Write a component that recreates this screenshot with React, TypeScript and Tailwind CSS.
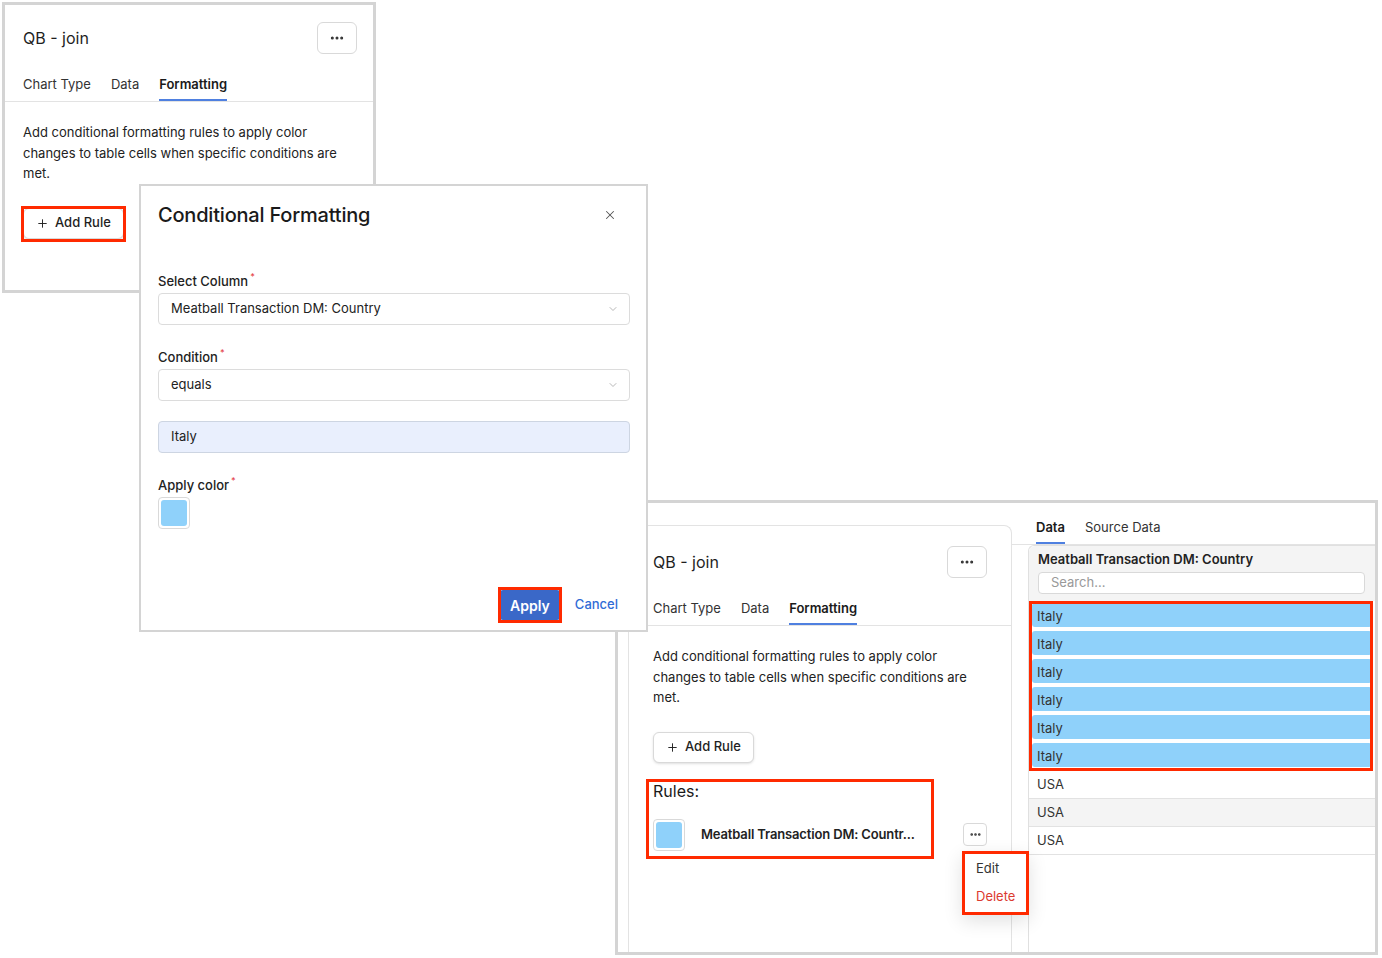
import type { ReactNode } from 'react';
import { ChevronDown, Ellipsis, Plus, X } from 'lucide-react';

const SKY = 'bg-[#8fd1fa]';

function Tabs({ pad, items, active, gap }: { pad: string; items: string[]; active: string; gap: string }) {
  return (
    <div className={`flex border-b border-[#e3e3e3] ${gap} ${pad}`}>
      {items.map((t) => (
        <div
          key={t}
          className={
            t === active
              ? 'border-b-2 border-[#4f80e0] pb-[5px] text-[13px] leading-5 font-semibold text-[#1a1a1a]'
              : 'border-b-2 border-transparent pb-[5px] text-[13px] leading-5 text-[#333]'
          }
        >
          {t}
        </div>
      ))}
    </div>
  );
}

function AddRuleButton({ marked }: { marked?: boolean }) {
  return (
    <div className="relative w-fit">
      <button className="flex h-[31px] items-center gap-[6px] rounded-md border border-[#d9d9d9] bg-white px-3 text-[13px] font-medium text-[#1f1f1f] shadow-sm">
        <Plus size={13} strokeWidth={1.75} />
        Add Rule
      </button>
      {marked && <div className="absolute -left-[2px] -right-[2px] -top-[2px] -bottom-[3px] border-[3px] border-[#ff2a00]" />}
    </div>
  );
}

// the chart settings panel, shown twice with different crops
function SettingsPanel({ pad, marked }: { pad: string; marked?: boolean }) {
  return (
    <>
      <div className={`flex h-8 items-center justify-between ${pad}`}>
        <span className="text-[16px] text-[#1f1f1f]">QB - join</span>
        <button className="flex h-8 w-10 items-center justify-center rounded-md border border-[#d9d9d9] bg-white">
          <Ellipsis size={16} strokeWidth={2.5} className="text-[#333]" />
        </button>
      </div>
      <div className="mt-5">
        <Tabs pad={pad} gap="gap-5" items={['Chart Type', 'Data', 'Formatting']} active="Formatting" />
      </div>
      <p className={`mt-5 text-[13px] leading-[20.5px] text-[#222] ${pad}`}>
        Add conditional formatting rules to apply color changes to table cells when specific conditions are met.
      </p>
      <div className={`mt-6 ${pad}`}>
        <AddRuleButton marked={marked} />
      </div>
    </>
  );
}

function Swatch() {
  return (
    <div className="flex h-8 w-8 items-center justify-center rounded-[4px] border border-[#d9d9d9] bg-white">
      <div className={`h-[26px] w-[26px] rounded-[3px] ${SKY}`} />
    </div>
  );
}

function Label({ children, className }: { children: ReactNode; className: string }) {
  return (
    <div className={`flex h-[18px] items-center text-[13px] leading-[18px] font-medium text-[#222] ${className}`}>
      {children}
      <span className="relative -top-[5px] ml-[2px] text-[9px] leading-none text-[#e5484d]">*</span>
    </div>
  );
}

function SelectBox({ value, className }: { value: string; className: string }) {
  return (
    <div className={`flex h-8 items-center justify-between rounded-[4px] border border-[#dcdcdc] bg-white pl-3 pr-[10px] text-[13px] text-[#222] ${className}`}>
      {value}
      <ChevronDown size={12} className="text-[#b8b8b8]" />
    </div>
  );
}

function ConditionModal() {
  return (
    <div className="absolute left-[139px] top-[184px] flex h-[448px] w-[509px] flex-col border-2 border-[#d4d4d4] bg-white pl-[17px] pr-4">
      <div className="mt-[15px] flex h-7 items-center justify-between">
        <h2 className="text-[20px] font-medium tracking-[-0.2px] text-[#1a1a1a]">Conditional Formatting</h2>
        <X size={14} strokeWidth={1.75} className="mr-[13px] text-[#555]" />
      </div>
      <Label className="mt-[43px]">Select Column</Label>
      <SelectBox className="mt-[3px]" value="Meatball Transaction DM: Country" />
      <Label className="mt-[23px]">Condition</Label>
      <SelectBox className="mt-[3px]" value="equals" />
      <div className="mt-5 flex h-8 items-center rounded-[4px] border border-[#cdd5e2] bg-[#e9effd] px-3 text-[13px] text-[#222]">
        Italy
      </div>
      <Label className="mt-[23px]">Apply color</Label>
      <div className="mt-[3px]">
        <Swatch />
      </div>
      <div className="mt-auto mb-[10px] flex items-center justify-end gap-[15px] pr-3">
        <div className="relative">
          <button className="h-[30px] w-[60px] rounded-[3px] bg-[#3a68c8] text-[14px] font-semibold text-white">Apply</button>
          <div className="absolute -left-[2px] -right-[2px] -top-[3px] -bottom-[3px] border-[3px] border-[#ff2a00]" />
        </div>
        <span className="text-[13px] font-medium text-[#2f6bd6]">Cancel</span>
      </div>
    </div>
  );
}

function RulesBlock() {
  return (
    <div className="relative mt-4 px-6">
      <div className="pt-px text-[16px] leading-[22px] text-[#1a1a1a]">Rules:</div>
      <div className="mt-[17px] flex items-center justify-between">
        <div className="flex items-center gap-4">
          <Swatch />
          <span className="text-[13px] font-semibold tracking-[-0.15px] text-[#222]">Meatball Transaction DM: Countr...</span>
        </div>
        <div className="relative">
          <button className="flex h-[23px] w-6 items-center justify-center rounded-[4px] border border-[#d9d9d9] bg-white">
            <Ellipsis size={13} strokeWidth={2.75} className="text-[#333]" />
          </button>
          {/* open row menu */}
          <div className="absolute -left-px top-[28px] z-10 h-[64px] w-[67px] border-[3px] border-[#ff2a00] bg-white pt-px pl-[11px] text-[13px] shadow-[0_6px_18px_rgba(0,0,0,0.12)]">
            <div className="flex h-7 items-center text-[#333]">Edit</div>
            <div className="flex h-7 items-center text-[#dc3a2f]">Delete</div>
          </div>
        </div>
      </div>
      <div className="absolute left-[17px] top-0 h-[80px] w-[288px] border-[3px] border-[#ff2a00]" />
    </div>
  );
}

function DataTable() {
  const italy = Array.from({ length: 6 });
  return (
    <div className="ml-4 flex-1 rounded-tl-[6px] border-l border-t border-[#e0e0e0]">
      <div className="rounded-tl-[6px] bg-[#f4f4f4] pb-[7px] pl-[9px] pr-[10px] pt-1">
        <div className="text-[13px] leading-[18px] font-semibold text-[#222]">Meatball Transaction DM: Country</div>
        <div className="mt-1 flex h-[22px] items-center rounded-[4px] border border-[#d9d9d9] bg-white pl-3 text-[13px] text-[#999]">
          Search...
        </div>
      </div>
      <div className="relative pt-[2px]">
        {italy.map((_, i) => (
          <div key={i} className="h-7 px-[3px]">
            <div className={`flex h-6 w-full items-center rounded-[3px] pl-[5px] pt-[3px] text-[13px] text-[#333] ${SKY}`}>Italy</div>
          </div>
        ))}
        <div className="absolute left-0 right-[2px] top-0 bottom-0 border-[3px] border-[#ff2a00]" />
      </div>
      {['bg-white', 'bg-[#f4f4f4]', 'bg-white'].map((bg, i) => (
        <div key={i} className={`flex h-7 items-center border-b border-[#e2e2e2] pl-[8px] text-[13px] text-[#333] ${bg}`}>
          USA
        </div>
      ))}
    </div>
  );
}

export default function App() {
  return (
    <div className="relative h-[958px] w-[1382px] overflow-hidden bg-white font-['Inter','Liberation_Sans',sans-serif]">
      {/* crop 1: empty formatting panel */}
      <div className="absolute left-[2px] top-[2px] h-[291px] w-[374px] border-[3px] border-[#d4d4d4] bg-white pt-[17px]">
        <SettingsPanel pad="pl-[18px] pr-4" marked />
      </div>

      {/* crop 3: panel with rule applied + data preview */}
      <div className="absolute left-[615px] top-[500px] flex h-[455px] w-[763px] border-[3px] border-[#d4d4d4] bg-white">
        <div className="flex w-[394px] flex-col pl-[10px] pt-[22px]">
          <div className="flex-1 rounded-tr-[8px] border-l border-r border-t border-[#e3e3e3] pt-5">
            <SettingsPanel pad="px-6" />
            <RulesBlock />
          </div>
        </div>
        <div className="flex flex-1 flex-col">
          <div className="pt-[14px]">
            <Tabs pad="pl-6" gap="gap-5" items={['Data', 'Source Data']} active="Data" />
          </div>
          <DataTable />
        </div>
      </div>

      {/* crop 2: the dialog */}
      <ConditionModal />
    </div>
  );
}
